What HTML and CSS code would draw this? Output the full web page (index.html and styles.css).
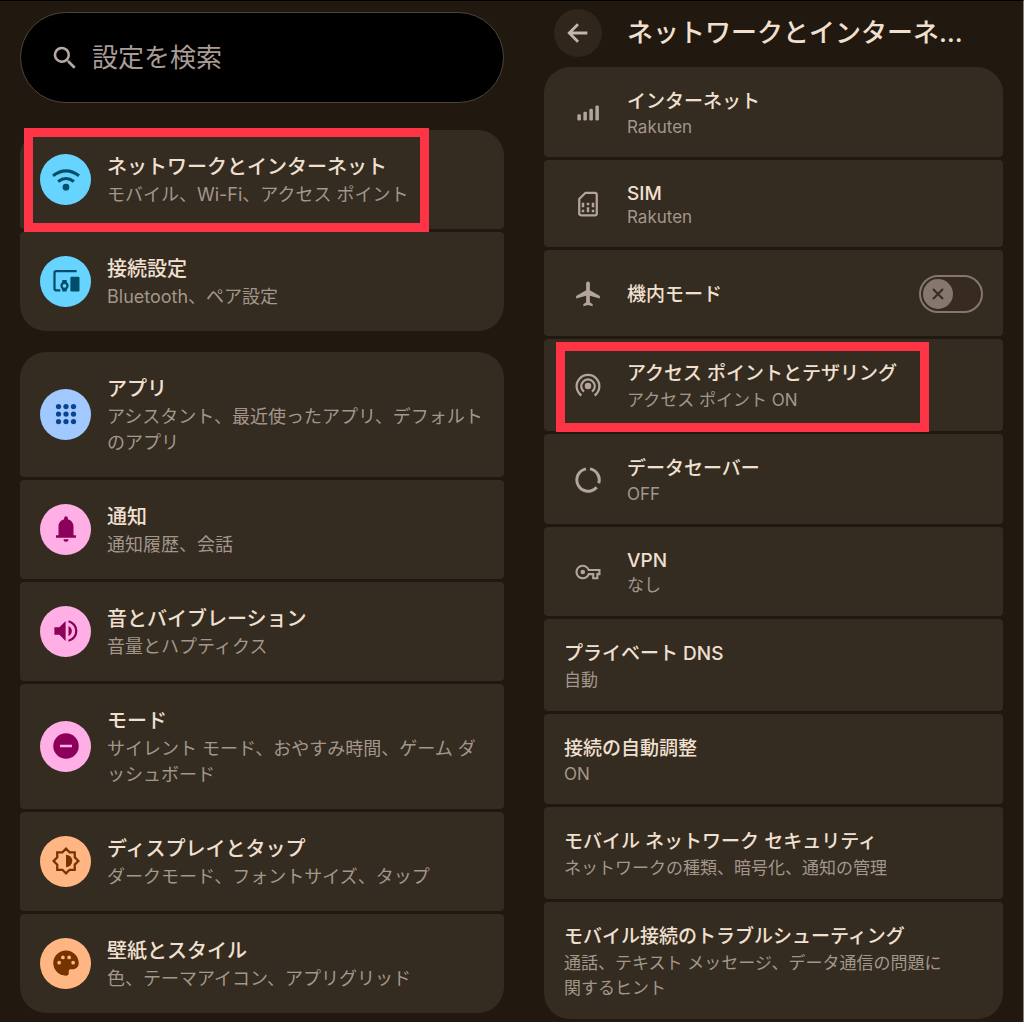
FILE: index.html
```html
<!DOCTYPE html>
<html lang="ja">
<head>
    <meta charset="UTF-8">
    <meta name="viewport" content="width=device-width, initial-scale=1.0">
    <title>設定</title>
    <link rel="stylesheet" href="styles.css">
</head>
<body>
    <div class="screens">
        <!-- Settings top page -->
        <main class="screen settings">
            <form class="search">
                <svg class="icon" viewBox="0 0 24 24" aria-hidden="true"><path d="M15.5 14h-.8l-.3-.3A6.5 6.5 0 1 0 13.7 14.4l.3.3v.8l5 5 1.5-1.5zm-6 0a4.5 4.5 0 1 1 0-9 4.5 4.5 0 0 1 0 9z"/></svg>
                <input type="search" placeholder="設定を検索" aria-label="設定を検索">
            </form>

            <ul class="group">
                <li>
                    <a class="card" href="#network">
                        <span class="badge cyan">
                            <svg class="icon" viewBox="0 0 24 24"><path class="line" d="M1.6 9.4Q12 1.6 22.4 9.4M5.7 14Q12 9.2 18.3 14"/><circle cx="12" cy="18.5" r="2.7"/></svg>
                        </span>
                        <span class="text">
                            <span class="title">ネットワークとインターネット</span>
                            <span class="summary">モバイル、Wi-Fi、アクセス ポイント</span>
                        </span>
                        <span class="marker marker-network"></span>
                    </a>
                </li>
                <li>
                    <a class="card" href="#devices">
                        <span class="badge cyan">
                            <svg class="icon" viewBox="0 0 24 24"><path class="line thin" d="M20.5 4H4.2Q2.8 4 2.8 5.4V18Q2.8 19.5 4.2 19.5H7.5"/><rect x="15.5" y="8.6" width="7.3" height="11.8" rx="1"/><path d="M9.2 11.2h3.2l.5 2H8.700zM8.700 18h4.200l-.5 2.400H9.200z"/><circle class="line thin" cx="10.8" cy="15.8" r="2.4"/></svg>
                        </span>
                        <span class="text">
                            <span class="title">接続設定</span>
                            <span class="summary">Bluetooth、ペア設定</span>
                        </span>
                    </a>
                </li>
            </ul>

            <ul class="group">
                <li>
                    <a class="card" href="#apps">
                        <span class="badge blue">
                            <svg class="icon" viewBox="0 0 24 24"><circle cx="6" cy="6" r="2.1"/><circle cx="12" cy="6" r="2.1"/><circle cx="18" cy="6" r="2.1"/><circle cx="6" cy="12" r="2.1"/><circle cx="12" cy="12" r="2.1"/><circle cx="18" cy="12" r="2.1"/><circle cx="6" cy="18" r="2.1"/><circle cx="12" cy="18" r="2.1"/><circle cx="18" cy="18" r="2.1"/></svg>
                        </span>
                        <span class="text">
                            <span class="title">アプリ</span>
                            <span class="summary">アシスタント、最近使ったアプリ、デフォルトのアプリ</span>
                        </span>
                    </a>
                </li>
                <li>
                    <a class="card" href="#notifications">
                        <span class="badge pink">
                            <svg class="icon" viewBox="0 0 24 24"><path d="M4 19v-2h2v-7c0-2.8 1.7-5.1 4.5-5.8v-.9a1.5 1.5 0 0 1 3 0v.9C16.3 4.9 18 7.2 18 10v7h2v2zM10 20.2h4a2 2 0 0 1-4 0z"/></svg>
                        </span>
                        <span class="text">
                            <span class="title">通知</span>
                            <span class="summary">通知履歴、会話</span>
                        </span>
                    </a>
                </li>
                <li>
                    <a class="card" href="#sound">
                        <span class="badge pink">
                            <svg class="icon" viewBox="0 0 24 24"><path d="M2.700 9v6h4l5 5V4l-5 5zM14 7.900a4.500 4.500 0 0 1 0 8.200z"/><path class="line thin" d="M14 4.200a8 8 0 0 1 0 15.600"/></svg>
                        </span>
                        <span class="text">
                            <span class="title">音とバイブレーション</span>
                            <span class="summary">音量とハプティクス</span>
                        </span>
                    </a>
                </li>
                <li>
                    <a class="card" href="#modes">
                        <span class="badge pink">
                            <svg class="icon" viewBox="0 0 24 24"><path fill-rule="evenodd" d="M12 1.8a10.2 10.2 0 1 0 0 20.4 10.2 10.2 0 0 0 0-20.4zM7.200 11h9.600v2H7.200z"/></svg>
                        </span>
                        <span class="text">
                            <span class="title">モード</span>
                            <span class="summary">サイレント モード、おやすみ時間、ゲーム ダッシュボード</span>
                        </span>
                    </a>
                </li>
                <li>
                    <a class="card" href="#display">
                        <span class="badge orange">
                            <svg class="icon" viewBox="0 0 24 24"><path class="line thin" d="M19 14.900L21.900 12 19 9.100V5h-4.100L12 2.100 9.100 5H5v4.100L2.100 12 5 14.900V19h4.100l2.900 2.900 2.900-2.900H19z"/><path d="M12 7v10a5 5 0 0 0 0-10z"/></svg>
                        </span>
                        <span class="text">
                            <span class="title">ディスプレイとタップ</span>
                            <span class="summary">ダークモード、フォントサイズ、タップ</span>
                        </span>
                    </a>
                </li>
                <li>
                    <a class="card" href="#wallpaper">
                        <span class="badge orange">
                            <svg class="icon" viewBox="0 0 24 24"><path fill-rule="evenodd" d="M12 1.900C6.300 1.900 1.800 6.400 1.800 12S6.300 22.100 12 22.100c1.400 0 2.200-.7 2.200-1.900v-1.700c0-1 .6-1.600 1.600-1.600h1.600c2.700 0 4.800-2.100 4.800-5 0-5.500-4.500-10-10.200-10zM6.500 10.200a1.500 1.500 0 1 1 0 3 1.500 1.500 0 0 1 0-3zM9.500 6a1.500 1.500 0 1 1 0 3 1.500 1.500 0 0 1 0-3zM14.500 6a1.500 1.500 0 1 1 0 3 1.500 1.500 0 0 1 0-3zM17.700 10.200a1.500 1.500 0 1 1 0 3 1.500 1.500 0 0 1 0-3z"/></svg>
                        </span>
                        <span class="text">
                            <span class="title">壁紙とスタイル</span>
                            <span class="summary">色、テーマアイコン、アプリグリッド</span>
                        </span>
                    </a>
                </li>
            </ul>
        </main>

        <!-- Network page -->
        <section class="screen network" id="network">
            <header class="topbar">
                <button type="button" class="back" aria-label="戻る">
                    <svg class="icon" viewBox="0 0 24 24"><path class="line" d="M20 12H5M12 4.500L4.500 12l7.500 7.500"/></svg>
                </button>
                <h1>ネットワークとインターネ…</h1>
            </header>

            <ul class="group">
                <li>
                    <a class="card" href="#internet">
                        <span class="slot">
                            <svg class="icon" viewBox="0 0 24 24"><rect x="3.500" y="13" width="2.800" height="5" rx="1"/><rect x="8.300" y="11" width="2.800" height="7" rx="1"/><rect x="13.100" y="8.500" width="2.800" height="9.500" rx="1"/><rect x="17.900" y="6" width="2.800" height="12" rx="1"/></svg>
                        </span>
                        <span class="text">
                            <span class="title">インターネット</span>
                            <span class="summary" lang="en">Rakuten</span>
                        </span>
                    </a>
                </li>
                <li>
                    <a class="card" href="#sim">
                        <span class="slot">
                            <svg class="icon" viewBox="0 0 24 24"><path class="line thin" d="M10 3h7.500Q19 3 19 4.500v15q0 1.500-1.500 1.500h-11Q5 21 5 19.500V8z"/><path d="M7 11h2v3.500H7zM11 11h2v2h-2zM15 11h2v3.500h-2zM7 16.500h2v2H7zM11 14.500h2v4h-2zM15 16.500h2v2h-2z"/></svg>
                        </span>
                        <span class="text">
                            <span class="title" lang="en">SIM</span>
                            <span class="summary" lang="en">Rakuten</span>
                        </span>
                    </a>
                </li>
                <li>
                    <label class="card single">
                        <span class="slot">
                            <svg class="icon" viewBox="0 0 24 24"><path d="M21.500 15.500v-2L13.500 9V3.500a1.500 1.500 0 0 0-3 0V9l-8 4.500v2l8-2.200v5.200l-2.200 1.700v1.600l3.700-1 3.700 1v-1.600l-2.200-1.700v-5.200z"/></svg>
                        </span>
                        <span class="text">
                            <span class="title">機内モード</span>
                        </span>
                        <span class="switch">
                            <input type="checkbox" role="switch">
                            <span class="knob">
                                <svg viewBox="0 0 12 12"><path d="M1 1l10 10M11 1L1 11"/></svg>
                            </span>
                        </span>
                    </label>
                </li>
                <li>
                    <a class="card" href="#tethering">
                        <span class="slot">
                            <svg class="icon" viewBox="0 0 24 24"><circle cx="12" cy="12" r="2.600"/><path class="line thin" d="M8.800 16.500a5.400 5.400 0 1 1 6.400 0M6.700 19.600a9.100 9.100 0 1 1 10.600 0"/></svg>
                        </span>
                        <span class="text">
                            <span class="title">アクセス ポイントとテザリング</span>
                            <span class="summary">アクセス ポイント ON</span>
                        </span>
                        <span class="marker marker-tethering"></span>
                    </a>
                </li>
                <li>
                    <a class="card" href="#data-saver">
                        <span class="slot">
                            <svg class="icon" viewBox="0 0 24 24"><path class="line" d="M13.600 3.100a9 9 0 0 1 7 11.500M18.900 17.800a9 9 0 1 1-8.500-14.700"/></svg>
                        </span>
                        <span class="text">
                            <span class="title">データセーバー</span>
                            <span class="summary" lang="en">OFF</span>
                        </span>
                    </a>
                </li>
                <li>
                    <a class="card" href="#vpn">
                        <span class="slot">
                            <svg class="icon" viewBox="-2.400 -2.400 28.800 28.800"><path d="M22 19h-6v-4h-2.680c-1.140 2.420-3.600 4-6.320 4-3.860 0-7-3.140-7-7s3.140-7 7-7c2.720 0 5.170 1.580 6.320 4H24v6h-2v4zm-4-2h2v-4h2v-2H11.940l-.23-.67C11.010 8.340 9.110 7 7 7c-2.760 0-5 2.240-5 5s2.240 5 5 5c2.110 0 4.010-1.340 4.710-3.330l.23-.67H18v4z"/><circle cx="7" cy="12" r="2.200"/></svg>
                        </span>
                        <span class="text">
                            <span class="title" lang="en">VPN</span>
                            <span class="summary">なし</span>
                        </span>
                    </a>
                </li>
                <li>
                    <a class="card" href="#private-dns">
                        <span class="text">
                            <span class="title">プライベート DNS</span>
                            <span class="summary">自動</span>
                        </span>
                    </a>
                </li>
                <li>
                    <a class="card" href="#auto-connect">
                        <span class="text">
                            <span class="title">接続の自動調整</span>
                            <span class="summary" lang="en">ON</span>
                        </span>
                    </a>
                </li>
                <li>
                    <a class="card" href="#security">
                        <span class="text">
                            <span class="title">モバイル ネットワーク セキュリティ</span>
                            <span class="summary">ネットワークの種類、暗号化、通知の管理</span>
                        </span>
                    </a>
                </li>
                <li>
                    <a class="card" href="#troubleshooting">
                        <span class="text">
                            <span class="title">モバイル接続のトラブルシューティング</span>
                            <span class="summary">通話、テキスト メッセージ、データ通信の問題に関するヒント</span>
                        </span>
                    </a>
                </li>
            </ul>
        </section>
    </div>
</body>
</html>
```

FILE: styles.css
```css
* {
    box-sizing: border-box;
}

body {
    margin: 0;
    background: #21180f;
    color: #f1e0d0;
    font-family: Inter, "Noto Sans CJK JP", sans-serif;
}

.screens {
    display: grid;
    grid-template-columns: 524fr 499fr;
    min-height: 100vh;
    border-top: 1px solid #000;
    border-right: 1px solid #8a8078;
}

.screen {
    min-width: 0;
    padding: 11px 20px 9px;
}

.network {
    padding: 8px 20px 3px;
}

.icon {
    display: block;
    flex: none;
    width: 30px;
    height: 30px;
    fill: currentColor;
}

.line {
    fill: none;
    stroke: currentColor;
    stroke-width: 2.4;
}

.thin {
    stroke-width: 1.8;
}

/* Search box */
.search {
    display: flex;
    align-items: center;
    gap: 12px;
    height: 91px;
    margin-bottom: 27px;
    padding: 0 29px;
    border: 1px solid #4d453d;
    border-radius: 46px;
    background: #000;
    color: #b5aaa3;
}

.search input {
    flex: 1;
    min-width: 0;
    padding: 0;
    border: 0;
    outline: 0;
    background: none;
    color: inherit;
    font: inherit;
    font-size: 26px;
}

.search input::placeholder {
    color: #a99c97;
}

/* Grouped cards */
.group {
    display: flex;
    flex-direction: column;
    gap: 3px;
    margin: 0;
    padding: 0;
    list-style: none;
}

.group + .group {
    margin-top: 21px;
}

.card {
    position: relative;
    display: flex;
    align-items: center;
    gap: 16px;
    padding: 20px 16px 21px 20px;
    border-radius: 4px;
    background: #342b21;
    color: inherit;
    text-decoration: none;
}

.group li:first-child .card {
    border-top-left-radius: 26px;
    border-top-right-radius: 26px;
}

.group li:last-child .card {
    border-bottom-left-radius: 26px;
    border-bottom-right-radius: 26px;
}

.badge {
    display: grid;
    place-items: center;
    flex: none;
    width: 51px;
    height: 51px;
    border-radius: 50%;
}

.cyan {
    background: #67d4ff;
    color: #004e69;
}

.blue {
    background: #a1c9ff;
    color: #0c4390;
}

.pink {
    background: #ffafe6;
    color: #8b0058;
}

.orange {
    background: #ffb683;
    color: #753300;
}

.text {
    flex: 1;
    min-width: 0;
    padding-top: 2px;
}

.title,
.summary {
    display: block;
}

.title {
    font-size: 20px;
    font-weight: 500;
    line-height: 30px;
}

.summary {
    color: #a3978b;
    font-size: 18px;
    line-height: 26px;
    line-break: loose;
}

/* Network page */
.topbar {
    display: flex;
    align-items: center;
    gap: 25px;
    margin-bottom: 10px;
    padding: 0 20px 0 10px;
}

.back {
    display: grid;
    place-items: center;
    flex: none;
    width: 48px;
    height: 48px;
    padding: 0;
    border: 0;
    border-radius: 50%;
    background: #30261c;
    color: #c4b7a9;
}

.back .icon {
    width: 28px;
    height: 28px;
}

.topbar h1 {
    margin: 0;
    font-size: 26px;
    font-weight: 500;
    line-height: 40px;
    white-space: nowrap;
}

.network .card {
    gap: 15px;
    padding: 19px 20px 18px;
}

.network .single {
    min-height: 86px;
}

.network .text {
    padding-top: 2px;
    padding-right: 30px;
}

.network .title {
    font-size: 19px;
    line-height: 28px;
}

.network .summary {
    font-size: 17px;
    line-height: 25px;
}

.network .title:lang(en) {
    line-height: 25px;
}

.network .summary:lang(en) {
    line-height: 23px;
}

.slot {
    display: grid;
    place-items: center;
    flex: none;
    width: 48px;
    color: #b3a698;
}

.switch {
    position: relative;
    flex: none;
    width: 64px;
    height: 38px;
}

.switch input {
    width: 100%;
    height: 100%;
    margin: 0;
    appearance: none;
    border: 2px solid #85776b;
    border-radius: 19px;
    background: #372b20;
}

.knob {
    position: absolute;
    top: 4px;
    left: 4px;
    display: grid;
    place-items: center;
    width: 30px;
    height: 30px;
    border-radius: 50%;
    background: #85776b;
    pointer-events: none;
}

.switch input:checked + .knob {
    left: 30px;
}

.knob svg {
    width: 12px;
    height: 12px;
    fill: none;
    stroke: #342b21;
    stroke-width: 2;
}

/* Red frames drawn over the steps to tap */
.marker {
    position: absolute;
    z-index: 1;
    border: 9px solid #ff3346;
    pointer-events: none;
}

.marker-network {
    top: -2px;
    left: 4px;
    width: 405px;
    height: 104px;
}

.marker-tethering {
    top: 3px;
    left: 12px;
    width: 373px;
    height: 90px;
}
```
